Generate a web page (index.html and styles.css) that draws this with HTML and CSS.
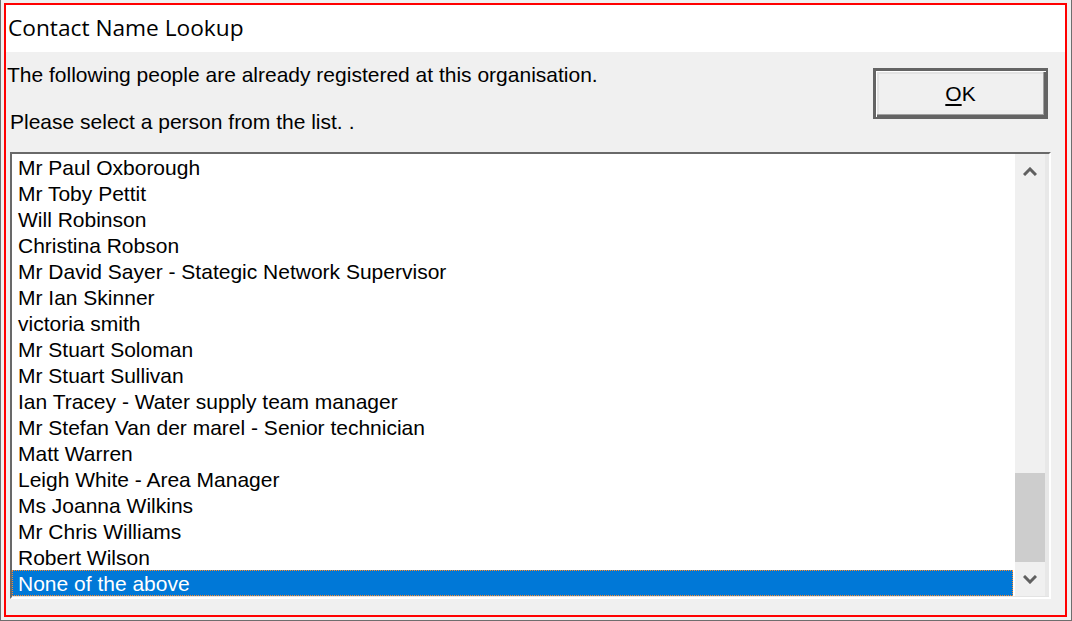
FILE: index.html
```html
<!DOCTYPE html>
<html>
<head>
<meta charset="utf-8">
<title>Contact Name Lookup</title>
<link rel="stylesheet" href="styles.css">
</head>
<body>
<div class="window">
  <div class="frame">
    <div class="titlebar">Contact Name Lookup</div>
    <div class="content">
      <div class="header">
        <div class="texts">
          <div class="line1">The following people are already registered at this organisation.</div>
          <div class="line2">Please select a person from the list.<span class="stray">.</span></div>
        </div>
        <button class="btn"><u>O</u>K</button>
      </div>
      <div class="listbox">
        <div class="items">
          <div class="row">Mr Paul Oxborough</div>
          <div class="row">Mr Toby Pettit</div>
          <div class="row">Will Robinson</div>
          <div class="row">Christina Robson</div>
          <div class="row">Mr David Sayer - Stategic Network Supervisor</div>
          <div class="row">Mr Ian Skinner</div>
          <div class="row">victoria smith</div>
          <div class="row">Mr Stuart Soloman</div>
          <div class="row">Mr Stuart Sullivan</div>
          <div class="row">Ian Tracey - Water supply team manager</div>
          <div class="row">Mr Stefan Van der marel - Senior technician</div>
          <div class="row">Matt Warren</div>
          <div class="row">Leigh White - Area Manager</div>
          <div class="row">Ms Joanna Wilkins</div>
          <div class="row">Mr Chris Williams</div>
          <div class="row">Robert Wilson</div>
          <div class="row selected">None of the above</div>
        </div>
        <div class="scrollbar">
          <div class="arrow">
            <svg width="14" height="9" viewBox="0 0 14 9"><path d="M1 8 L7 2 L13 8" fill="none" stroke="#606060" stroke-width="3"/></svg>
          </div>
          <div class="track">
            <div class="thumb"></div>
          </div>
          <div class="arrow">
            <svg width="14" height="9" viewBox="0 0 14 9"><path d="M1 1 L7 7 L13 1" fill="none" stroke="#606060" stroke-width="3"/></svg>
          </div>
        </div>
      </div>
    </div>
  </div>
</div>
</body>
</html>
```

FILE: styles.css
```css
html, body {
  margin: 0;
  padding: 0;
  background: #f0f0f0;
}

.window {
  width: 1072px;
  height: 621px;
  box-sizing: border-box;
  border-left: 1px solid #6e6e6e;
  border-right: 1px solid #6e6e6e;
  border-bottom: 1px solid #6e6e6e;
  padding: 3px 4px 3px 3px;
  background: #f0f0f0;
}

.frame {
  height: 614px;
  box-sizing: border-box;
  border: 2px solid #ff0000;
  display: flex;
  flex-direction: column;
}

.titlebar {
  height: 47px;
  box-sizing: border-box;
  background: #ffffff;
  padding: 8px 0 0 2px;
  font-family: "Open Sans", "Noto Sans", sans-serif;
  font-size: 22.7px;
  line-height: 30px;
  color: #000;
}

.content {
  flex: 1;
  display: flex;
  flex-direction: column;
  background: #f0f0f0;
  font-family: "Liberation Sans", Arial, sans-serif;
  font-size: 21px;
  color: #000;
}

.header {
  height: 100px;
  display: flex;
  justify-content: space-between;
  align-items: flex-start;
}

.texts {
  display: flex;
  flex-direction: column;
}

.line1 {
  margin-top: 11px;
  margin-left: 1px;
  line-height: 24px;
}

.line2 {
  margin-top: 23px;
  margin-left: 4px;
  line-height: 24px;
}

.stray {
  margin-left: 6px;
}

.btn {
  margin-top: 16px;
  margin-right: 17px;
  width: 175px;
  height: 51px;
  box-sizing: border-box;
  border: 2px solid #646464;
  background: #f0f0f0;
  box-shadow:
    inset 1px 1px 0 #646464,
    inset 2px 2px 0 #ffffff,
    inset -2px -2px 0 #646464,
    inset -3px -3px 0 #a0a0a0,
    inset 4px 4px 0 #e3e3e3;
  font-family: "Liberation Sans", Arial, sans-serif;
  font-size: 21px;
  line-height: 24px;
  color: #000;
  padding: 1px 0 0 0;
  cursor: default;
}

.btn u {
  text-decoration-thickness: 2px;
  text-underline-offset: 3px;
}

.listbox {
  margin-left: 4px;
  width: 1041px;
  height: 447px;
  box-sizing: border-box;
  border-style: solid;
  border-width: 2px 2px 2px 2px;
  border-color: #696969 #ffffff #ffffff #696969;
  padding-bottom: 1px;
  background: #ffffff;
  box-shadow: inset 0 -1px 0 #e3e3e3;
  display: flex;
}

.items {
  flex: 1;
  margin-right: 2px;
  display: flex;
  flex-direction: column;
}

.row {
  height: 26px;
  box-sizing: border-box;
  padding: 2px 0 0 6px;
  line-height: 24px;
  white-space: nowrap;
}

.row.selected {
  background: #0078d7;
  color: #ffffff;
  outline: 1px dotted #ff8a28;
  outline-offset: -1px;
}

.scrollbar {
  width: 30px;
  border-right: 4px solid #e8e8e8;
  background: #f0f0f0;
  display: flex;
  flex-direction: column;
}

.arrow {
  height: 34px;
  display: flex;
  align-items: center;
  justify-content: center;
}

.arrow svg {
  display: block;
}

.track {
  flex: 1;
  display: flex;
  flex-direction: column;
  justify-content: flex-end;
}

.thumb {
  height: 89px;
  background: #cdcdcd;
}
```
